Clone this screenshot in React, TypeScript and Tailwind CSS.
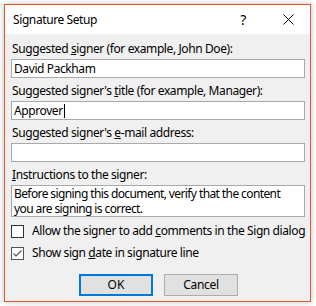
import React from "react";

const font = { fontFamily: '"Noto Sans", "Open Sans", Arial, sans-serif' };

function Label({ children }: { children: React.ReactNode }) {
  return (
    <div className="h-[16px] leading-[16px] text-[12px] tracking-[-0.4px] whitespace-nowrap text-black pl-[1px]">
      {children}
    </div>
  );
}

function Input({ value, caret }: { value?: string; caret?: boolean }) {
  return (
    <div className="mt-[2px] h-[19px] w-[294px] border border-[#a9a9a9] bg-white flex items-center pl-[2px] text-[12px] tracking-[-0.4px] leading-[16px] text-black whitespace-nowrap">
      {value}
      {caret && <span className="inline-block w-px h-[14px] bg-black ml-[1px]" />}
    </div>
  );
}

function Checkbox({ checked, children }: { checked?: boolean; children: React.ReactNode }) {
  return (
    <div className="flex items-center h-[16px] text-[12px] tracking-[-0.4px] leading-[16px] text-black whitespace-nowrap">
      <div
        className={
          "w-[13px] h-[13px] shrink-0 border bg-white flex items-center justify-center " +
          (checked ? "border-[#555555]" : "border-[#333333]")
        }
      >
        {checked && (
          <svg width="11" height="11" viewBox="0 0 11 11">
            <path d="M1.5 5.5 L4 8 L9.5 2.5" stroke="#555555" strokeWidth="1.2" fill="none" />
          </svg>
        )}
      </div>
      <span className="ml-[8px]">{children}</span>
    </div>
  );
}

export default function App() {
  return (
    <div className="w-[316px] h-[306px] bg-white pt-[4px] pl-[4px] overflow-hidden" style={font}>
      <div className="w-[307px] h-[298px] border border-[#e0582a] bg-[#f0f0f0] flex flex-col shadow-[0_0_6px_rgba(0,0,0,0.25)]">
        <div className="h-[29px] bg-white flex items-center pl-[8px] text-[12px] tracking-[-0.4px] text-black">
          <span>Signature Setup</span>
          <span className="ml-auto text-[14px] mr-[37px]">?</span>
          <svg width="11" height="11" viewBox="0 0 11 11" className="mr-[16px]">
            <path d="M0.5 0.5 L10.5 10.5 M10.5 0.5 L0.5 10.5" stroke="#000" strokeWidth="1" />
          </svg>
        </div>
        <div className="flex flex-col pl-[6px] pt-[7px]">
          <Label>
            Suggested <u>s</u>igner (for example, John Doe):
          </Label>
          <Input value="David Packham" />
          <div className="h-[5px]" />
          <Label>
            Suggested signer's <u>t</u>itle (for example, Manager):
          </Label>
          <Input value="Approver" caret />
          <div className="h-[5px]" />
          <Label>
            Suggested signer's <u>e</u>-mail address:
          </Label>
          <Input />
          <div className="h-[5px]" />
          <Label>
            <u>I</u>nstructions to the signer:
          </Label>
          <div className="mt-[2px] h-[32px] w-[294px] border border-[#a9a9a9] bg-white pl-[2px] text-[12px] tracking-[-0.6px] leading-[15px] text-black whitespace-nowrap">
            Before signing this document, verify that the content
            <br />
            you are signing is correct.
          </div>
          <div className="h-[6px]" />
          <div className="flex flex-col gap-[6px]">
            <Checkbox>
              Allow the signer to add <u>c</u>omments in the Sign dialog
            </Checkbox>
            <Checkbox checked>
              Show sign <u>d</u>ate in signature line
            </Checkbox>
          </div>
          <div className="flex pl-[68px] gap-[11px] mt-[13px]">
            <div className="w-[74px] h-[22px] border-2 border-[#0078d7] bg-[#e1e1e1] flex items-center justify-center text-[12px] text-black">
              OK
            </div>
            <div className="w-[74px] h-[22px] border border-[#adadad] bg-[#e1e1e1] flex items-center justify-center text-[12px] tracking-[-0.3px] text-black">
              Cancel
            </div>
          </div>
        </div>
      </div>
    </div>
  );
}
